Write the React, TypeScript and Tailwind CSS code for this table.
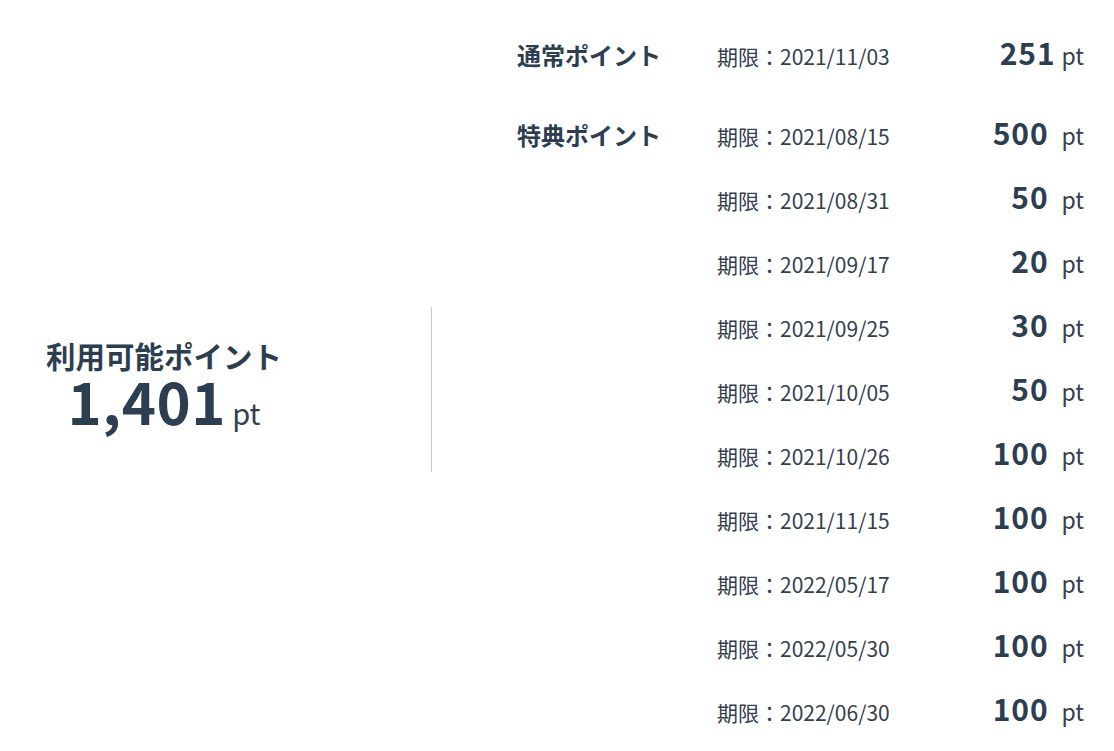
type PointRow = {
  date: string;
  amount: string;
};

const regular: PointRow[] = [{ date: '2021/11/03', amount: '251' }];

const bonus: PointRow[] = [
  { date: '2021/08/15', amount: '500' },
  { date: '2021/08/31', amount: '50' },
  { date: '2021/09/17', amount: '20' },
  { date: '2021/09/25', amount: '30' },
  { date: '2021/10/05', amount: '50' },
  { date: '2021/10/26', amount: '100' },
  { date: '2021/11/15', amount: '100' },
  { date: '2022/05/17', amount: '100' },
  { date: '2022/05/30', amount: '100' },
  { date: '2022/06/30', amount: '100' },
];

function Group({ label, rows, tight }: { label: string; rows: PointRow[]; tight?: boolean }) {
  return (
    <div>
      {rows.map((row, i) => (
        <div key={i} className="flex items-center h-16">
          <div className="flex items-baseline w-full">
            <span className="w-[200px] text-[24px] font-bold leading-none">{i === 0 ? label : ''}</span>
            <span className="text-[21px] leading-none text-[#34404d]">期限：{row.date}</span>
            <span
              className={
                'ml-auto text-right text-[30px] tracking-[0.03em] font-bold leading-none ' +
                (tight ? 'mr-[6px]' : 'mr-[13px]')
              }
            >
              {row.amount}
            </span>
            <span className="text-[23px] leading-none text-[#34404d]">pt</span>
          </div>
        </div>
      ))}
    </div>
  );
}

function App() {
  return (
    <div
      className="flex items-center w-[1114px] min-h-screen bg-white text-[#2c3e50] pt-5 pb-[34px]"
      style={{ fontFamily: '"Noto Sans CJK JP", "Noto Sans", sans-serif' }}
    >
      <div className="w-[432px] h-[165px] border-r border-[#cccccc] flex items-center shrink-0">
        <div className="w-[328px] flex flex-col items-center">
          <div className="text-[29.5px] font-bold leading-[30px]">利用可能ポイント</div>
          <div className="flex items-baseline leading-[52px] mt-[4px]">
            <span className="text-[58px] font-bold tracking-[0.01em]">1,401</span>
            <span className="text-[29px] ml-[6px] text-[#34404d]">pt</span>
          </div>
        </div>
      </div>
      <div className="flex-1 ml-[85px] mr-[30px] pb-[18px]">
        <Group label="通常ポイント" rows={regular} tight />
        <div className="h-4" />
        <Group label="特典ポイント" rows={bonus} />
      </div>
    </div>
  );
}

export default App;
